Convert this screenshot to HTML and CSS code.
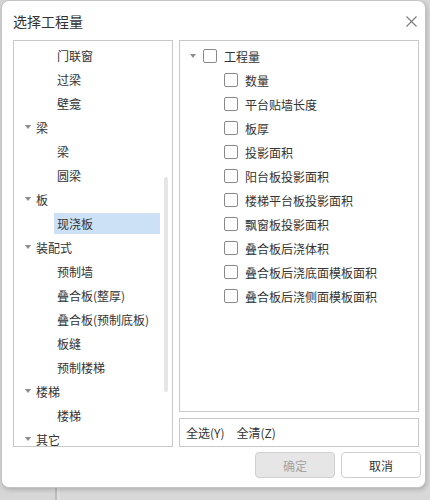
FILE: index.html
```html
<!DOCTYPE html>
<html lang="zh-CN">
<head>
<meta charset="utf-8">
<title>选择工程量</title>
<link rel="stylesheet" href="styles.css">
</head>
<body>
<div class="dialog">
  <div class="header">
    <span class="title">选择工程量</span>
    <span class="close">
      <svg width="11" height="11" viewBox="0 0 11 11"><path d="M0.5 0.5 L10.5 10.5 M10.5 0.5 L0.5 10.5" stroke="#7a7a7a" stroke-width="1.1" fill="none"/></svg>
    </span>
  </div>
  <div class="body">
    <div class="panel left">
      <ul class="tree">
        <li class="row child"><span class="label">门联窗</span></li>
        <li class="row child"><span class="label">过梁</span></li>
        <li class="row child"><span class="label">壁龛</span></li>
        <li class="row parent"><span class="arrow"></span><span class="label">梁</span></li>
        <li class="row child"><span class="label">梁</span></li>
        <li class="row child"><span class="label">圆梁</span></li>
        <li class="row parent"><span class="arrow"></span><span class="label">板</span></li>
        <li class="row child"><span class="label selected">现浇板</span></li>
        <li class="row parent"><span class="arrow"></span><span class="label">装配式</span></li>
        <li class="row child"><span class="label">预制墙</span></li>
        <li class="row child"><span class="label">叠合板(整厚)</span></li>
        <li class="row child"><span class="label">叠合板(预制底板)</span></li>
        <li class="row child"><span class="label">板缝</span></li>
        <li class="row child"><span class="label">预制楼梯</span></li>
        <li class="row parent"><span class="arrow"></span><span class="label">楼梯</span></li>
        <li class="row child"><span class="label">楼梯</span></li>
        <li class="row parent"><span class="arrow"></span><span class="label">其它</span></li>
      </ul>
      <div class="scroll"><div class="thumb"></div></div>
    </div>
    <div class="rightcol">
      <div class="panel right">
        <ul class="checks">
          <li class="crow top"><span class="arrow"></span><span class="box"></span><span class="ctext">工程量</span></li>
          <li class="crow sub"><span class="box"></span><span class="ctext">数量</span></li>
          <li class="crow sub"><span class="box"></span><span class="ctext">平台贴墙长度</span></li>
          <li class="crow sub"><span class="box"></span><span class="ctext">板厚</span></li>
          <li class="crow sub"><span class="box"></span><span class="ctext">投影面积</span></li>
          <li class="crow sub"><span class="box"></span><span class="ctext">阳台板投影面积</span></li>
          <li class="crow sub"><span class="box"></span><span class="ctext">楼梯平台板投影面积</span></li>
          <li class="crow sub"><span class="box"></span><span class="ctext">飘窗板投影面积</span></li>
          <li class="crow sub"><span class="box"></span><span class="ctext">叠合板后浇体积</span></li>
          <li class="crow sub"><span class="box"></span><span class="ctext">叠合板后浇底面模板面积</span></li>
          <li class="crow sub"><span class="box"></span><span class="ctext">叠合板后浇侧面模板面积</span></li>
        </ul>
      </div>
      <div class="panel actions">
        <span class="link">全选(Y)</span>
        <span class="link">全清(Z)</span>
      </div>
    </div>
  </div>
  <div class="footer">
    <button class="btn disabled">确定</button>
    <button class="btn">取消</button>
  </div>
</div>
</body>
</html>
```

FILE: styles.css
```css
html, body {
  margin: 0;
  padding: 0;
}
body {
  width: 430px;
  height: 500px;
  overflow: hidden;
  background: linear-gradient(to right, #d6d6d6 0, #d6d6d6 55px, #bcbcbc 55px, #bcbcbc 57px, #dedede 57px, #dedede 60px, #d8d8d8 60px);
  font-family: "Noto Sans CJK SC", "Noto Sans", sans-serif;
  font-size: 12px;
  color: #333;
}
.dialog {
  box-sizing: border-box;
  width: 425px;
  height: 488px;
  margin-left: 1px;
  background: #fff;
  border: 1px solid #c4c4c4;
  border-radius: 8px;
  box-shadow: 1px 2px 4px rgba(0, 0, 0, 0.18);
  display: flex;
  flex-direction: column;
  padding: 0 4px 0 11px;
}
.header {
  height: 39px;
  display: flex;
  align-items: center;
  justify-content: space-between;
}
.title {
  font-size: 14px;
  color: #333;
  margin-top: 1px;
}
.close {
  display: flex;
  width: 11px;
  height: 11px;
  margin-right: 4px;
  margin-top: 1px;
}
.body {
  display: flex;
  gap: 6px;
  height: 407px;
}
.panel {
  box-sizing: border-box;
  border: 1px solid #c8c8c8;
  background: #fff;
}
.left {
  width: 160px;
  height: 407px;
  display: flex;
  overflow: hidden;
}
.tree {
  list-style: none;
  margin: 0;
  padding: 2px 0 0 0;
  flex: 1;
  overflow: hidden;
}
.row {
  height: 24px;
  display: flex;
  align-items: center;
  white-space: nowrap;
}
.row.parent {
  padding-left: 11px;
}
.row.child {
  padding-left: 40px;
}
.arrow {
  width: 0;
  height: 0;
  border-left: 3.5px solid transparent;
  border-right: 3.5px solid transparent;
  border-top: 4px solid #8c8c8c;
  margin-right: 5px;
}
.label {
  line-height: 21px;
  padding: 0 3px;
}
.row.parent .label {
  padding-left: 0;
}
.label.selected {
  background: #cce1f6;
  width: 100px;
  display: inline-block;
}
.scroll {
  width: 8px;
  flex: none;
}
.thumb {
  width: 4px;
  height: 215px;
  margin-top: 136px;
  background: #e6e6e6;
  border-radius: 2px;
}
.rightcol {
  width: 240px;
  display: flex;
  flex-direction: column;
  gap: 6px;
}
.right {
  height: 372px;
}
.checks {
  list-style: none;
  margin: 0;
  padding: 3px 0 0 0;
}
.crow {
  height: 24px;
  display: flex;
  align-items: center;
  white-space: nowrap;
}
.crow.top {
  padding-left: 10px;
}
.crow.top .arrow {
  margin-right: 7px;
}
.crow.sub {
  padding-left: 44px;
}
.box {
  box-sizing: border-box;
  width: 14px;
  height: 14px;
  border: 1px solid #8a8a8a;
  border-radius: 2px;
  margin-right: 7px;
  background: #fff;
}
.actions {
  height: 29px;
  display: flex;
  align-items: center;
  padding-left: 6px;
  gap: 12px;
}
.footer {
  display: flex;
  justify-content: flex-end;
  gap: 6px;
  padding-top: 5px;
}
.btn {
  box-sizing: border-box;
  width: 80px;
  height: 26px;
  border: 1px solid #cfcfcf;
  border-radius: 4px;
  background: #fff;
  font-family: "Noto Sans CJK SC", "Noto Sans", sans-serif;
  font-size: 12px;
  color: #333;
  padding: 0;
}
.btn.disabled {
  background: #e6e6e6;
  color: #a3a3a3;
  border-color: #d0d0d0;
}
```
